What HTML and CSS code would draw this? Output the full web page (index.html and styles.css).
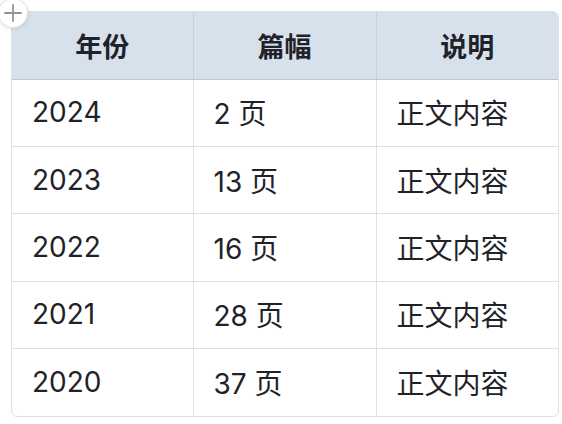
FILE: index.html
```html
<!DOCTYPE html>
<html lang="zh-CN">
<head>
<meta charset="utf-8">
<link rel="stylesheet" href="styles.css">
</head>
<body>
<div class="page">
  <div class="table-wrap">
    <table class="grid">
      <colgroup><col class="c1"><col class="c2"><col class="c3"></colgroup>
      <thead>
        <tr><th>年份</th><th>篇幅</th><th>说明</th></tr>
      </thead>
      <tbody>
        <tr><td>2024</td><td>2 页</td><td>正文内容</td></tr>
        <tr><td>2023</td><td>13 页</td><td>正文内容</td></tr>
        <tr><td>2022</td><td>16 页</td><td>正文内容</td></tr>
        <tr><td>2021</td><td>28 页</td><td>正文内容</td></tr>
        <tr><td>2020</td><td>37 页</td><td>正文内容</td></tr>
      </tbody>
    </table>
  </div>
  <div class="add-btn" aria-label="add">
    <svg width="20" height="20" viewBox="0 0 20 20"><path d="M10 2v16M2 10h16" stroke="#8f959e" stroke-width="1.8" fill="none" stroke-linecap="round"/></svg>
  </div>
</div>
</body>
</html>
```

FILE: styles.css
```css
html, body {
  margin: 0;
  padding: 0;
  background: #ffffff;
}
.page {
  position: relative;
  width: 562px;
  height: 424px;
  padding: 11px 0 0 11px;
  box-sizing: border-box;
  font-family: "Inter", "Noto Sans CJK SC", sans-serif;
  color: #1f2329;
}
.table-wrap {
  width: 548px;
  border: 1px solid #dee0e3;
  border-radius: 6px;
  overflow: hidden;
  box-sizing: border-box;
}
.grid {
  width: 100%;
  border-collapse: collapse;
  table-layout: fixed;
}
.c1 { width: 181px; }
.c2 { width: 183px; }
.c3 { width: auto; }
.grid th {
  height: 67px;
  box-sizing: border-box;
  background: #d7e1ec;
  font-size: 27px;
  font-weight: 700;
  text-align: center;
  padding: 0;
  border-right: 1px solid #c7d1dc;
  border-bottom: 1px solid #bcc7d3;
}
.grid td {
  height: 67.4px;
  box-sizing: border-box;
  font-size: 28px;
  font-weight: 400;
  text-align: left;
  padding: 0 0 1px 20px;
  border-right: 1px solid #dee0e3;
  border-bottom: 1px solid #dee0e3;
}
.grid th:last-child, .grid td:last-child { border-right: none; }
.grid tbody tr:last-child td { border-bottom: none; }
.add-btn {
  position: absolute;
  left: -2px;
  top: -2px;
  width: 30px;
  height: 30px;
  border-radius: 50%;
  background: #ffffff;
  border: 1px solid #e3e5e8;
  box-shadow: 0 1px 4px rgba(31, 35, 41, 0.12);
  display: flex;
  align-items: center;
  justify-content: center;
  box-sizing: border-box;
}
```
